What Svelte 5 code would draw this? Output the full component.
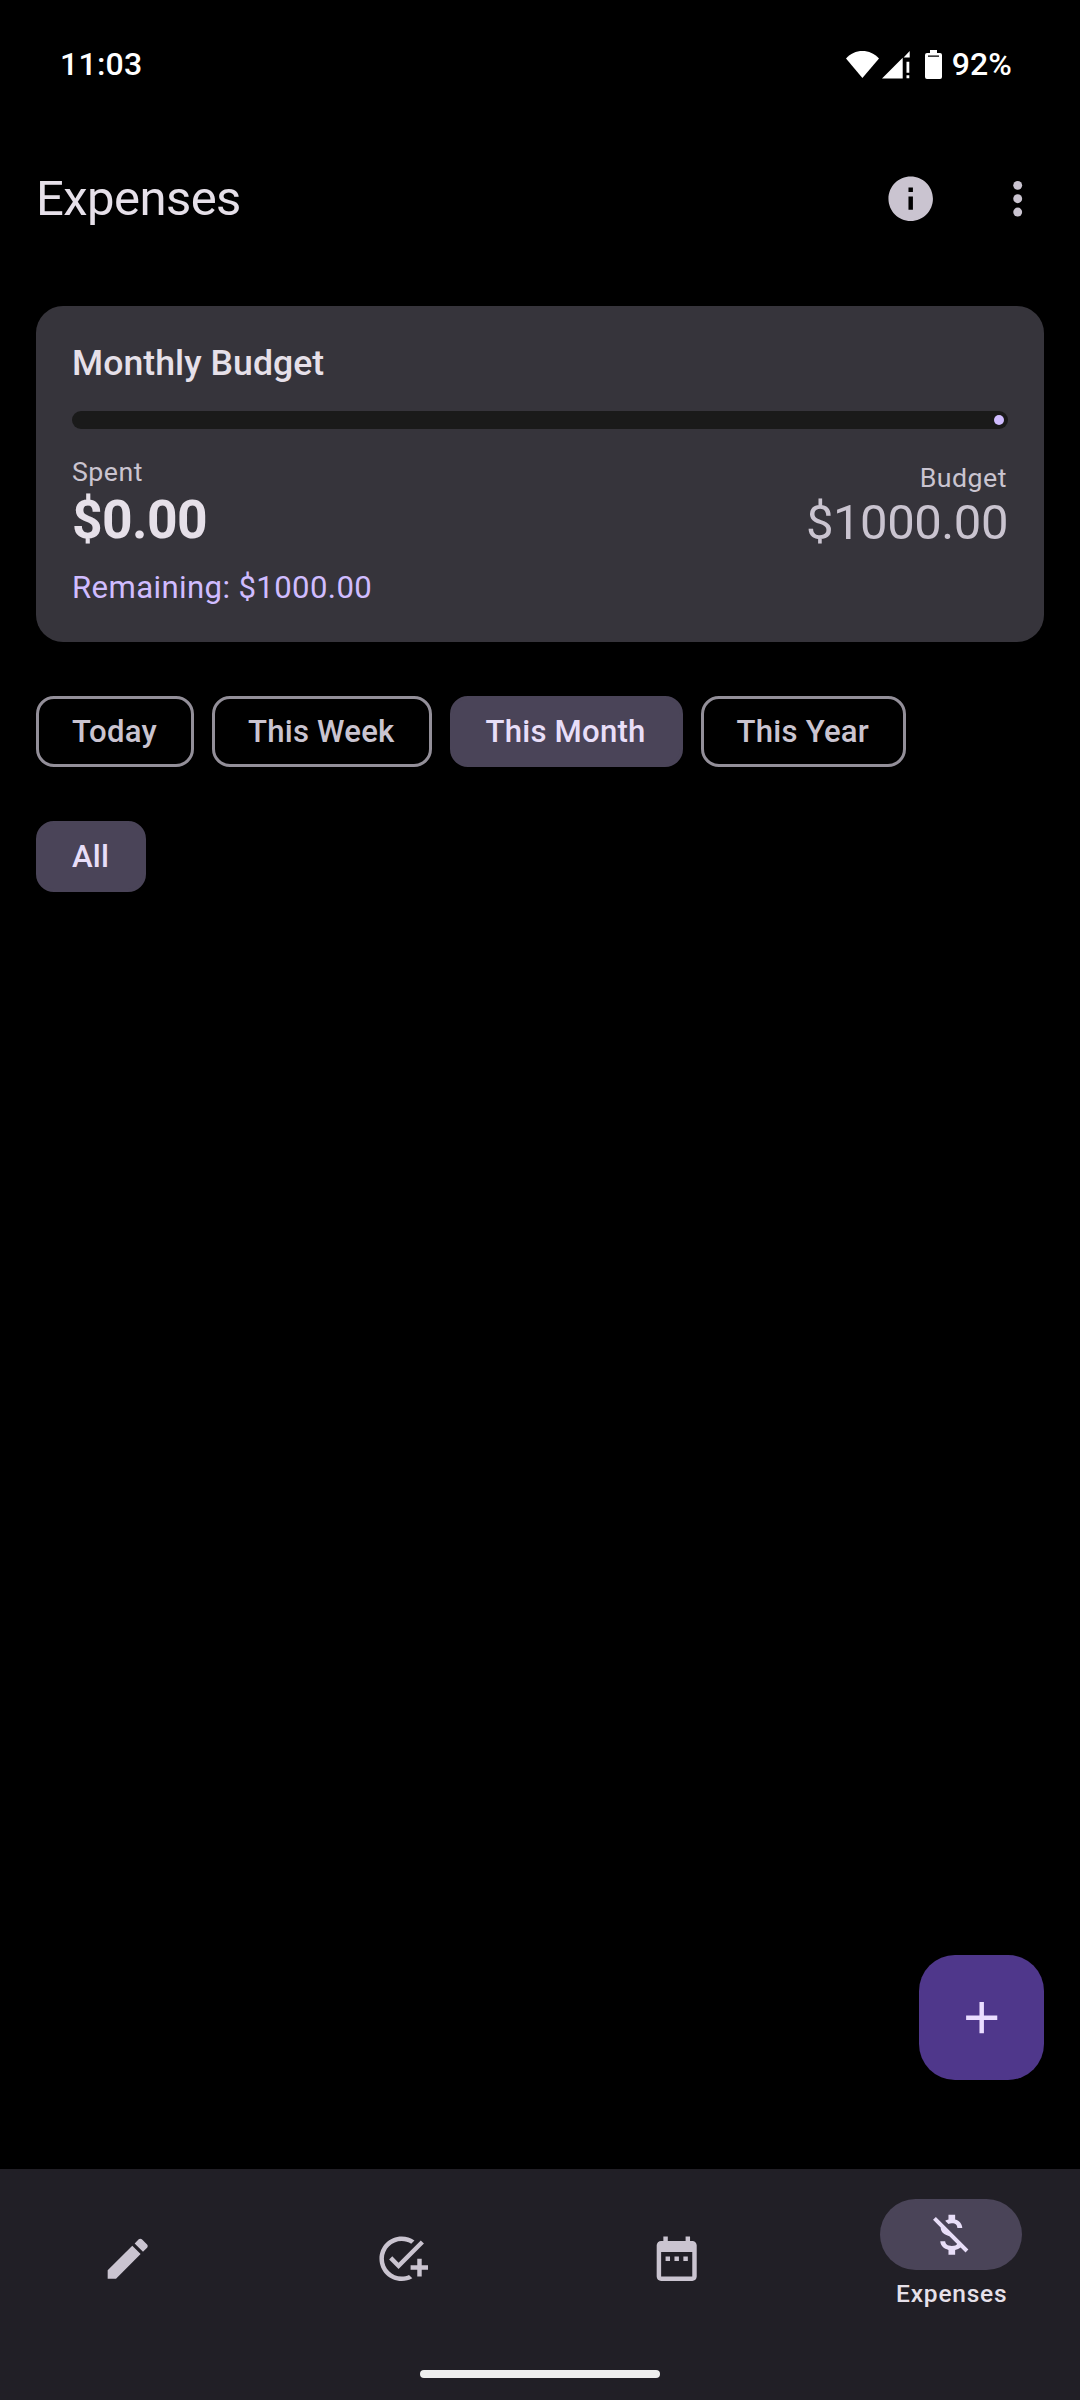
<script>
  const periods = ['Today', 'This Week', 'This Month', 'This Year'];
  let period = $state('This Month');

  const tabs = [
    {
      name: 'Notes',
      path: 'M3 17.25V21h3.75L17.81 9.94l-3.75-3.75L3 17.25zM20.71 7.04c.39-.39.39-1.02 0-1.41l-2.34-2.34c-.39-.39-1.02-.39-1.41 0l-1.83 1.83 3.75 3.75 1.83-1.83z'
    },
    {
      name: 'Tasks',
      path: 'M22 5.18L10.59 16.6l-4.24-4.24 1.41-1.41 2.83 2.83 10-10L22 5.18zM12 20c-4.41 0-8-3.59-8-8s3.59-8 8-8c1.57 0 3.04.46 4.28 1.25l1.45-1.45C16.1 2.67 14.13 2 12 2 6.48 2 2 6.48 2 12s4.48 10 10 10c1.73 0 3.36-.44 4.78-1.22l-1.5-1.5c-1 .46-2.11.72-3.28.72zM19 15h-3v2h3v3h2v-3h3v-2h-3v-3h-2v3z'
    },
    {
      name: 'Calendar',
      path: 'M9 11H7v2h2v-2zm4 0h-2v2h2v-2zm4 0h-2v2h2v-2zm2-7h-1V2h-2v2H8V2H6v2H5c-1.11 0-1.99.9-1.99 2L3 20c0 1.1.89 2 2 2h14c1.1 0 2-.9 2-2V6c0-1.1-.9-2-2-2zm0 16H5V9h14v11z'
    },
    {
      name: 'Expenses',
      path: 'M12.5 6.9c1.78 0 2.44.85 2.5 2.1h2.21c-.07-1.72-1.12-3.3-3.21-3.81V3h-3v2.16c-.53.12-1.03.3-1.48.54l1.47 1.47c.41-.17.91-.27 1.51-.27zM5.33 4.06L4.06 5.33 7.5 8.77c0 2.08 1.56 3.21 3.91 3.91l3.51 3.51c-.34.48-1.05.91-2.42.91-2.06 0-2.87-.92-2.98-2.1h-2.2c.12 2.19 1.76 3.42 3.68 3.83V21h3v-2.15c.96-.18 1.82-.55 2.45-1.12l2.22 2.22 1.27-1.27L5.33 4.06z'
    }
  ];
  let tab = $state('Expenses');
</script>

<div class="screen">
  <div class="status">
    <span class="clock">11:03</span>
    <div class="system">
      <svg width="98" height="30" viewBox="0 0 98 30" fill="#fff">
        <path d="M1 8.5C5.4 3.6 11 1 17.4 1S29.500 3.600 34 8.500L17.400 28z" />
        <path d="M37 28.500L57.700 7.800V28.500zM58.600 7.500L64.700 1V7.500zM61.500 11.700h2.800v11h-2.800zM61.500 25.300h2.800v3h-2.800z" />
        <path
          fill-rule="evenodd"
          d="M85 0h7v3h3a2 2 0 0 1 2 2v22a2 2 0 0 1-2 2H82a2 2 0 0 1-2-2V5a2 2 0 0 1 2-2h3zM83 5.600v1.200h11V5.600z"
        />
      </svg>
      <span class="percent">92%</span>
    </div>
  </div>

  <header>
    <h1>Expenses</h1>
    <div class="actions">
      <svg class="icon" viewBox="0 0 24 24">
        <path d="M12 2C6.480 2 2 6.480 2 12s4.480 10 10 10 10-4.480 10-10S17.520 2 12 2zm1 15h-2v-6h2v6zm0-8h-2V7h2v2z" />
      </svg>
      <svg class="icon" viewBox="0 0 24 24">
        <circle cx="12" cy="6" r="2" />
        <circle cx="12" cy="12" r="2" />
        <circle cx="12" cy="18" r="2" />
      </svg>
    </div>
  </header>

  <main>
    <section class="card">
      <h2>Monthly Budget</h2>
      <div class="track"><span class="stop"></span></div>
      <div class="amounts">
        <div>
          <div class="caption">Spent</div>
          <div class="spent">$0.00</div>
        </div>
        <div class="right">
          <div class="caption">Budget</div>
          <div class="budget">$1000.00</div>
        </div>
      </div>
      <div class="remaining">Remaining: $1000.00</div>
    </section>

    <div class="chips">
      {#each periods as p}
        <button class="chip" class:on={p === period} onclick={() => (period = p)}>{p}</button>
      {/each}
    </div>

    <div class="chips">
      <button class="chip on">All</button>
    </div>

    <button class="fab" aria-label="Add expense">
      <svg class="icon" viewBox="0 0 24 24"><path d="M19 13h-6v6h-2v-6H5v-2h6V5h2v6h6v2z" /></svg>
    </button>
  </main>

  <nav>
    <div class="tabs">
      {#each tabs as t}
        <button class="tab" class:active={t.name === tab} aria-label={t.name} onclick={() => (tab = t.name)}>
          <span class="pill">
            <svg class="icon" viewBox="0 0 24 24"><path d={t.path} /></svg>
          </span>
          {#if t.name === tab}<span class="label">{t.name}</span>{/if}
        </button>
      {/each}
    </div>
    <div class="handle"></div>
  </nav>
</div>

<style>
  :global(body) {
    background: #000;
  }
  .screen {
    display: flex;
    flex-direction: column;
    width: 1080px;
    height: 2400px;
    background: #000;
    color: #e6e0e9;
    font-family: Roboto, 'Liberation Sans', sans-serif;
  }
  h1,
  h2 {
    margin: 0;
  }
  button {
    margin: 0;
    padding: 0;
    border: 0;
    background: none;
    color: inherit;
    font: inherit;
  }
  .icon {
    display: block;
    width: 53.400px;
    height: 53.400px;
    fill: currentColor;
  }
  .status {
    display: flex;
    justify-content: space-between;
    align-items: center;
    height: 128px;
    padding: 0 68px 0 60px;
    box-sizing: border-box;
    color: #fff;
    font-size: 32px;
    font-weight: 500;
    line-height: 38px;
  }
  .clock {
    letter-spacing: 0.250px;
  }
  .system {
    display: flex;
    align-items: center;
    gap: 9px;
  }
  .percent {
    letter-spacing: 0.100px;
  }
  .system svg {
    margin-top: 2px;
  }
  header {
    display: flex;
    justify-content: space-between;
    align-items: center;
    height: 141px;
    padding: 0 36px;
  }
  h1 {
    font-size: 49px;
    font-weight: 400;
    line-height: 58px;
    letter-spacing: -0.560px;
  }
  .actions {
    display: flex;
    gap: 53.500px;
    color: #cac4d0;
  }
  main {
    display: flex;
    flex: 1;
    flex-direction: column;
    gap: 54px;
    padding: 37px 36px 89px;
  }
  .card {
    display: flex;
    flex-direction: column;
    height: 336px;
    padding: 36px;
    box-sizing: border-box;
    border-radius: 27px;
    background: #36343b;
  }
  h2 {
    font-size: 35.600px;
    font-weight: 500;
    line-height: 42px;
    letter-spacing: 0.060px;
  }
  .track {
    display: flex;
    justify-content: flex-end;
    align-items: center;
    height: 18px;
    margin: 27px 0;
    padding-right: 4px;
    border-radius: 9px;
    background: #1a1a1a;
  }
  .stop {
    width: 10px;
    height: 10px;
    border-radius: 50%;
    background: #d0bcff;
  }
  .amounts {
    display: flex;
    justify-content: space-between;
    align-items: flex-end;
  }
  .right {
    text-align: right;
  }
  .caption {
    padding-right: 1px;
    color: #cac4d0;
    font-size: 26.700px;
    line-height: 32px;
    letter-spacing: 0.500px;
  }
  .spent {
    font-size: 53.400px;
    font-weight: 700;
    line-height: 63px;
    letter-spacing: -0.600px;
  }
  .budget {
    color: #cac4d0;
    font-size: 49px;
    line-height: 57px;
    letter-spacing: -0.450px;
  }
  .remaining {
    margin-top: 18px;
    color: #d0bcff;
    font-size: 31.150px;
    line-height: 37px;
    letter-spacing: 0.380px;
  }
  .chips {
    display: flex;
    gap: 18px;
  }
  .chip {
    height: 71px;
    padding: 0 34px 0 33px;
    border: 3px solid #938f99;
    border-radius: 18px;
    color: #cac4d0;
    font-size: 31.150px;
    font-weight: 500;
    line-height: 65px;
    letter-spacing: 0.220px;
    white-space: nowrap;
  }
  .chip.on {
    border-color: #4a4458;
    background: #4a4458;
    color: #e8def8;
  }
  .fab {
    display: grid;
    place-items: center;
    align-self: flex-end;
    width: 125px;
    height: 125px;
    margin-top: auto;
    border-radius: 36px;
    background: #4f378b;
    color: #eaddff;
  }
  nav {
    display: flex;
    flex-direction: column;
    align-items: center;
    height: 231px;
    background: #211f26;
  }
  .tabs {
    display: grid;
    grid-template-columns: repeat(4, 256.500px);
    gap: 18px;
    width: 1082px;
    height: 179px;
    margin-bottom: 22px;
  }
  .tab {
    display: flex;
    flex-direction: column;
    align-items: center;
    justify-content: center;
    color: #cac4d0;
  }
  .pill {
    display: grid;
    place-items: center;
    width: 142px;
    height: 71px;
    border-radius: 36px;
  }
  .tab.active {
    justify-content: flex-start;
    padding-top: 30px;
    color: #e8def8;
  }
  .active .pill {
    background: #4a4458;
  }
  .label {
    margin-top: 9px;
    padding-left: 2px;
    color: #e6e0e9;
    font-size: 24.500px;
    font-weight: 500;
    line-height: 29px;
    letter-spacing: 0.780px;
  }
  .handle {
    width: 240px;
    height: 8px;
    border-radius: 4px;
    background: #eee;
  }
</style>
